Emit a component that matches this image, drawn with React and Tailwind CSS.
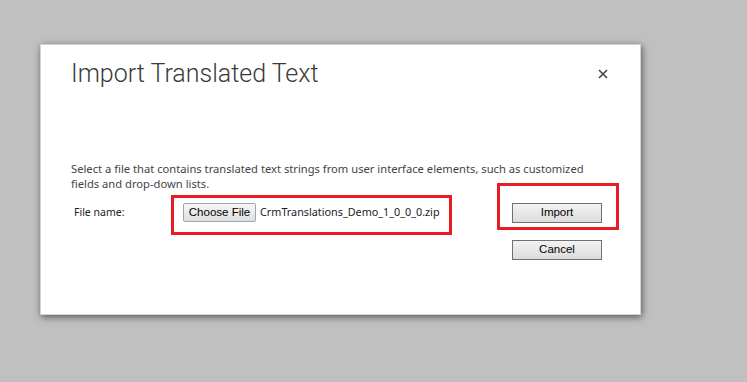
export default function App() {
  const btn =
    "h-[20px] w-[90px] border border-[#707070] bg-gradient-to-b from-[#f3f3f3] to-[#dcdcdc] text-[11.5px] text-black leading-none";
  return (
    <div className="w-[747px] h-[382px] bg-[#c0c0c0] pt-[44px] pl-[40px] overflow-hidden">
      <div className="relative w-[601px] h-[271px] bg-white border border-[#d4d4d4] shadow-[1px_2px_7px_rgba(0,0,0,0.55)]">
        <div className="flex items-start justify-between pl-[30px] pr-[32px] pt-[12px]">
          <h1
            className="text-[25px] font-light leading-[34px] text-[#3a3a3a]"
            style={{ fontFamily: 'Roboto, "Open Sans", sans-serif' }}
          >
            Import Translated Text
          </h1>
          <button className="mt-[12px] w-[10px] h-[10px] flex items-center justify-center" aria-label="Close">
            <svg width="10" height="10" viewBox="0 0 10 10">
              <path d="M1 1 L9 9 M9 1 L1 9" stroke="#444" strokeWidth="1.6" />
            </svg>
          </button>
        </div>
        <div
          className="pl-[30px] pr-[10px] mt-[70px] text-[11.2px] leading-[15px] text-[#444]"
          style={{ fontFamily: '"Noto Sans", "Open Sans", sans-serif' }}
        >
          <p>
            Select a file that contains translated text strings from user interface elements, such as customized
            <br />
            fields and drop-down lists.
          </p>
        </div>
        <div className="flex items-start pl-[33px] mt-[12px]">
          <div
            className="w-[109px] h-[19px] flex items-center text-[10.5px] text-[#222]"
            style={{ fontFamily: '"Noto Sans", "DejaVu Sans", sans-serif' }}
          >
            File name:
          </div>
          <div className="w-[329px] flex items-center">
            <button
              className="h-[19px] w-[73px] rounded-[2px] border border-[#9aa5b8] bg-gradient-to-b from-[#f7f7f7] to-[#dedede] text-[11.5px] text-black leading-none"
              style={{ fontFamily: '"Liberation Sans", Arial, sans-serif' }}
            >
              Choose File
            </button>
            <span
              className="ml-[4px] text-[10.8px] text-[#222]"
              style={{ fontFamily: '"Noto Sans", "Open Sans", sans-serif' }}
            >
              CrmTranslations_Demo_1_0_0_0.zip
            </span>
          </div>
          <div className="flex flex-col gap-[17px]" style={{ fontFamily: '"Liberation Sans", Arial, sans-serif' }}>
            <button className={btn}>Import</button>
            <button className={btn}>Cancel</button>
          </div>
        </div>
        <div className="absolute left-[130px] top-[150px] w-[281px] h-[40px] border-[3px] border-[#e81c24]" />
        <div className="absolute left-[456px] top-[138px] w-[122px] h-[47px] border-[3px] border-[#e81c24]" />
      </div>
    </div>
  );
}
